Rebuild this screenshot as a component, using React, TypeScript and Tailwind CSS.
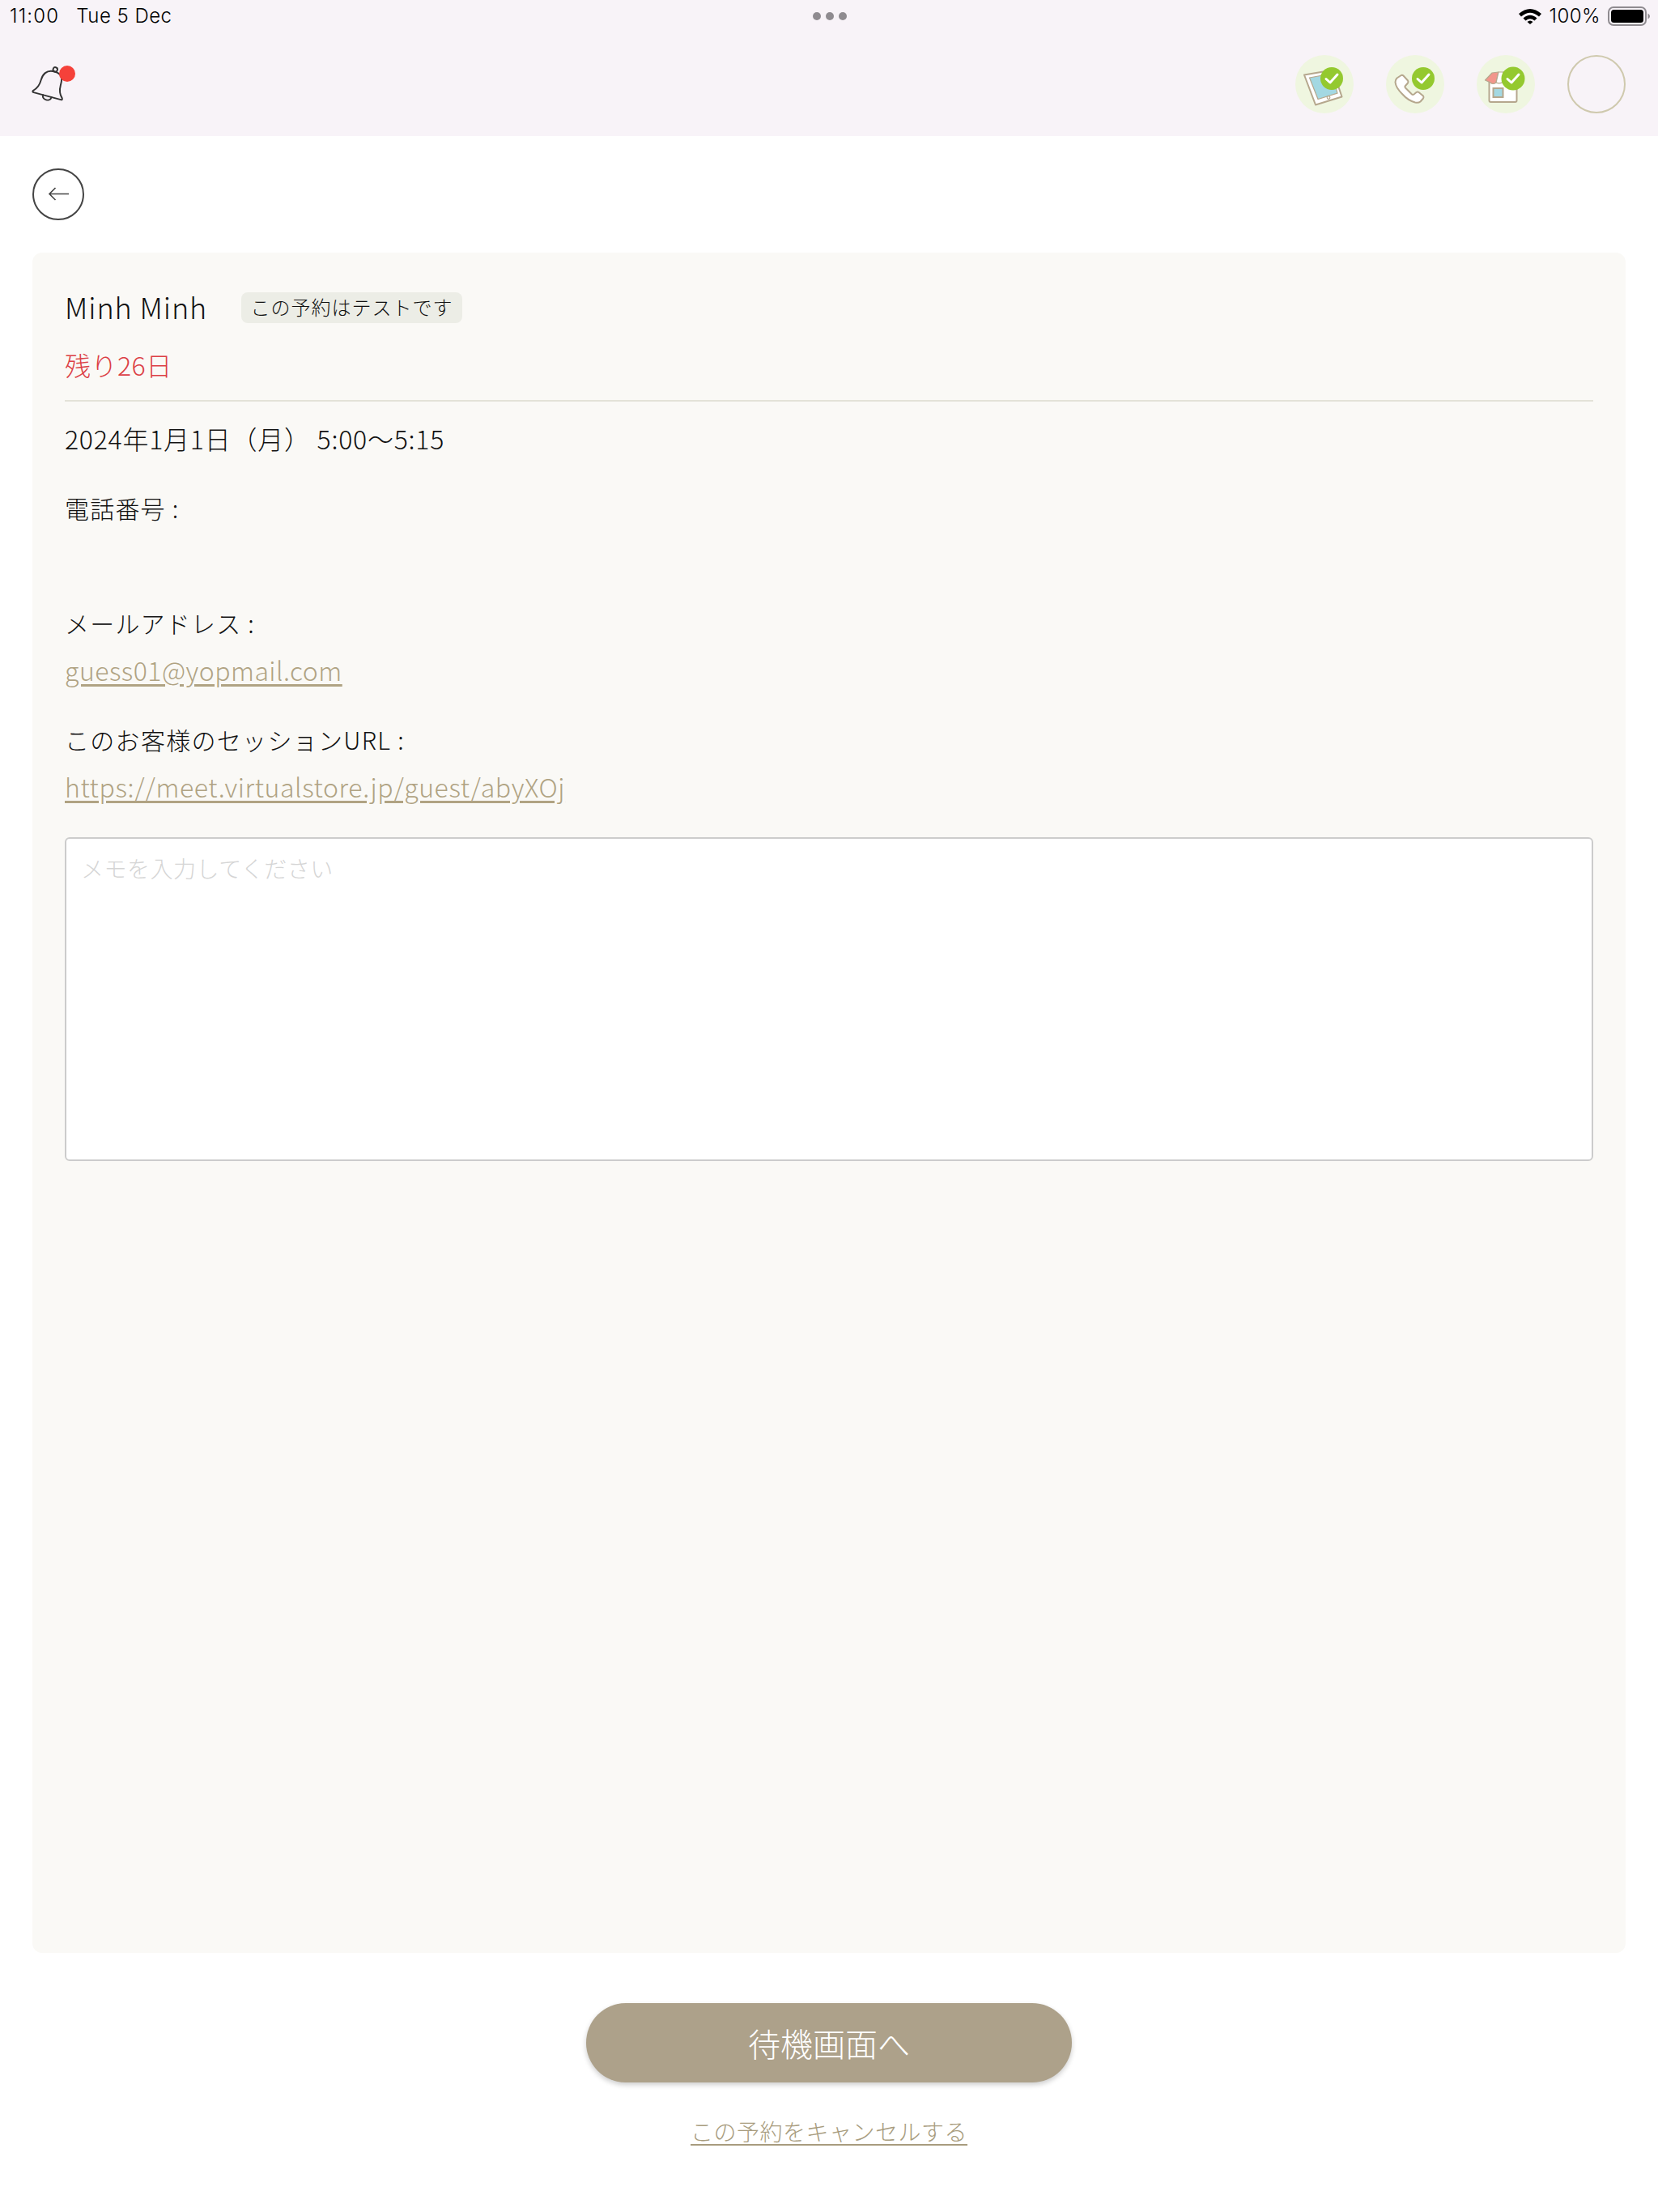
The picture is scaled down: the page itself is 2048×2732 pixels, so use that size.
const jp = "font-['Noto_Sans_CJK_JP','Noto_Sans',sans-serif]";

function CheckBadge({ cx, r = 14 }: { cx: number; r?: number }) {
  return (
    <>
      <circle cx={cx} cy={29} r={r} fill="#94c92f" />
      <path
        d={`M${cx - 7} ${29.5} L${cx - 2} ${34} L${cx + 7} ${24}`}
        fill="none"
        stroke="#fff"
        strokeWidth="3"
        strokeLinecap="round"
        strokeLinejoin="round"
      />
    </>
  );
}

function TabletIcon() {
  return (
    <svg viewBox="0 0 72 72" className="h-[72px] w-[72px]">
      <circle cx="36" cy="36" r="36" fill="#eff6e0" />
      <path d="M11 24.5 L46.5 18.5 L57.5 51.5 L25 61.5 Z" fill="#fff" stroke="#b5a78d" strokeWidth="2" strokeLinejoin="round" />
      <path d="M17.5 28 L45 23 L52 47 L28 54.5 Z" fill="#a3d8e2" stroke="#b5a78d" strokeWidth="1.2" />
      <circle cx="41" cy="52.5" r="1.8" fill="#fff" stroke="#b5a78d" strokeWidth="1.2" />
      <CheckBadge cx={45} />
    </svg>
  );
}

function PhoneIcon() {
  return (
    <svg viewBox="0 0 72 72" className="h-[72px] w-[72px]">
      <circle cx="36" cy="36" r="36" fill="#eff6e0" />
      <path
        d="M18 25.5 Q20 24 21.5 25.5 L27 31.5 Q28 33 27 34.5 L23.5 38.5 Q23 39.5 24 40.5 L32 48.5 Q33 49.5 34.5 48.5 L37.5 46 Q39 45 40.5 46 L46 50.5 Q47 52 46 53.5 L42.5 57.5 Q40 59.5 36 58.5 Q27 56 20 48 Q12 40 11.5 33.5 Q11.5 30.5 13.5 28.5 Z"
        fill="#fff"
        stroke="#b5a78d"
        strokeWidth="2"
        strokeLinejoin="round"
      />
      <CheckBadge cx={46} />
    </svg>
  );
}

function StoreIcon() {
  return (
    <svg viewBox="0 0 72 72" className="h-[72px] w-[72px]">
      <circle cx="36" cy="36" r="36" fill="#eff6e0" />
      <rect x="15.5" y="30" width="34" height="28" rx="2" fill="#fff" stroke="#b5a78d" strokeWidth="2" />
      <rect x="20.5" y="41" width="12" height="11" fill="#a3d8e2" stroke="#b5a78d" strokeWidth="2" />
      <path d="M19 22 L27 21 L24 34 Q20 37 17 34 L10.5 31 Z" fill="#f2968c" stroke="#b5a78d" strokeWidth="1.2" strokeLinejoin="round" />
      <path d="M27 21 L33 21 L33 33 Q29 36 24 34 Z" fill="#fff" stroke="#b5a78d" strokeWidth="1.2" strokeLinejoin="round" />
      <path d="M33 21 L40 21 L42 33 Q37 36 33 33 Z" fill="#f2968c" stroke="#b5a78d" strokeWidth="1.2" strokeLinejoin="round" />
      <CheckBadge cx={45} r={14.5} />
    </svg>
  );
}

function StatusBar() {
  return (
    <div className="grid h-10 grid-cols-[1fr_auto_1fr] items-center pl-3 pr-[10px] text-[24px] tracking-[0.02em] text-black font-['Inter',sans-serif]">
      <div className="flex gap-[21px]">
        <span className="tracking-[1.2px]">11:00</span>
        <span>Tue 5 Dec</span>
      </div>
      <div className="flex gap-[6px]">
        <span className="h-[10px] w-[10px] rounded-full bg-[#8f8b90]" />
        <span className="h-[10px] w-[10px] rounded-full bg-[#8f8b90]" />
        <span className="h-[10px] w-[10px] rounded-full bg-[#8f8b90]" />
      </div>
      <div className="flex items-center justify-end gap-[9px]">
        <svg viewBox="0 0 28 20" className="h-5 w-7">
          <path d="M0 7 Q14 -5 28 7 L25 10.5 Q14 1 3 10.5 Z" fill="#000" />
          <path d="M5.5 12.5 Q14 5 22.5 12.5 L19.5 15.5 Q14 11 8.5 15.5 Z" fill="#000" />
          <path d="M10.5 17 Q14 14 17.5 17 L14 20 Z" fill="#000" />
        </svg>
        <span>100%</span>
        <svg viewBox="0 0 52 24" className="h-6 w-[52px]">
          <rect x="1" y="1" width="46" height="22" rx="6" fill="none" stroke="#8f8b90" strokeWidth="2" />
          <rect x="4" y="4" width="40" height="16" rx="3.5" fill="#000" />
          <path d="M49.5 8.5 Q52 10 52 12 Q52 14 49.5 15.5 Z" fill="#8f8b90" />
        </svg>
      </div>
    </div>
  );
}

function Header() {
  return (
    <header className="h-[168px] bg-[#f8f3f8]">
      <StatusBar />
      <div className="flex h-32 items-center justify-between px-10">
        <div className="relative h-12 w-12">
          <svg viewBox="0 0 40 46" className="h-[50px] w-11 max-w-none rotate-[15deg]" fill="none" stroke="#333" strokeWidth="1.8" strokeLinejoin="round" strokeLinecap="round">
            <circle cx="21" cy="4.5" r="2.5" />
            <path d="M21 7 C11 7 8.5 14 8.5 20 C8.5 27 6.5 31 3 34 Q2 36 4 36 L36 36 Q38 36 37 34 C33.5 31 31.5 27 31.5 20 C31.5 14 31 7 21 7 Z" />
            <path d="M15 36 C15 42 25 42 25 36" />
          </svg>
          <span className="absolute left-[33px] top-[1px] h-5 w-5 rounded-full bg-[#f5413a]" />
        </div>
        <div className="flex items-center gap-10">
          <TabletIcon />
          <PhoneIcon />
          <StoreIcon />
          <div className="h-[72px] w-[72px] rounded-full border-2 border-[#cfc9ae]" />
        </div>
      </div>
    </header>
  );
}

export default function App() {
  return (
    <div className={`flex min-h-[2732px] flex-col bg-white font-light text-[#111] ${jp}`}>
      <Header />
      <main className="flex flex-col px-10 pt-10">
        <button className="flex h-16 w-16 items-center justify-center rounded-full border-2 border-[#444]">
          <svg viewBox="0 0 26 18" className="h-[18px] w-[26px]" fill="none" stroke="#444" strokeWidth="1.6">
            <path d="M26 8.5 H2 M9.5 1 L2 8.5 L9.5 16" />
          </svg>
        </button>

        <section className="mt-10 h-[2100px] rounded-xl bg-[#faf9f6] p-10">
          <div className="flex h-14 items-center">
            <h1 className="w-[178px] whitespace-nowrap pb-1 text-[36px] font-light tracking-[0.025em]">Minh Minh</h1>
            <span className="ml-10 flex h-[38px] w-[273px] items-center justify-center rounded-lg bg-[#ecede6] pb-[2px] text-[24px] tracking-[1px]">
              この予約はテストです
            </span>
          </div>
          <p className="mt-[18px] text-[32px] leading-[48px] tracking-[0.5px] text-[#dc3f45]">残り26日</p>
          <div className="mt-5 h-0.5 bg-[#e3e2d8]" />
          <p className="mt-[21px] text-[32px] leading-[48px] tracking-[0.75px]">2024年1月1日（月） 5:00〜5:15</p>
          <p className="mt-[38px] text-[30px] leading-[48px] tracking-[1.2px]">電話番号 :</p>
          <p className="mt-[94px] text-[30px] leading-[48px] tracking-[1.2px]">メールアドレス :</p>
          <a className="mt-[10px] block w-fit text-[32px] leading-[48px] tracking-[0.47px] text-[#b0a383] underline underline-offset-4">
            guess01@yopmail.com
          </a>
          <p className="mt-[38px] text-[30px] leading-[48px] tracking-[1.3px]">このお客様のセッションURL :</p>
          <a className="mt-[10px] block w-fit text-[32px] leading-[48px] tracking-[0.6px] text-[#b0a383] underline underline-offset-4">
            https://meet.virtualstore.jp/guest/abyXOj
          </a>
          <textarea
            placeholder="メモを入力してください"
            className="mt-[39px] block h-[400px] w-full resize-none rounded-md border-2 border-[#ccc] bg-white px-[18px] py-[15px] text-[28px] font-light tracking-[0.5px] placeholder:text-[#d5d5d5]"
          />
        </section>

        <button className="mx-auto mt-[62px] h-[98px] w-[600px] rounded-full bg-[#ada18a] text-[40px] font-light text-white shadow-[0_3px_6px_rgba(0,0,0,0.2)]">
          待機画面へ
        </button>
        <a className="mx-auto mt-[37px] text-[28px] leading-[46px] tracking-[0.5px] text-[#a89c7e] underline underline-offset-4">
          この予約をキャンセルする
        </a>
      </main>
    </div>
  );
}
